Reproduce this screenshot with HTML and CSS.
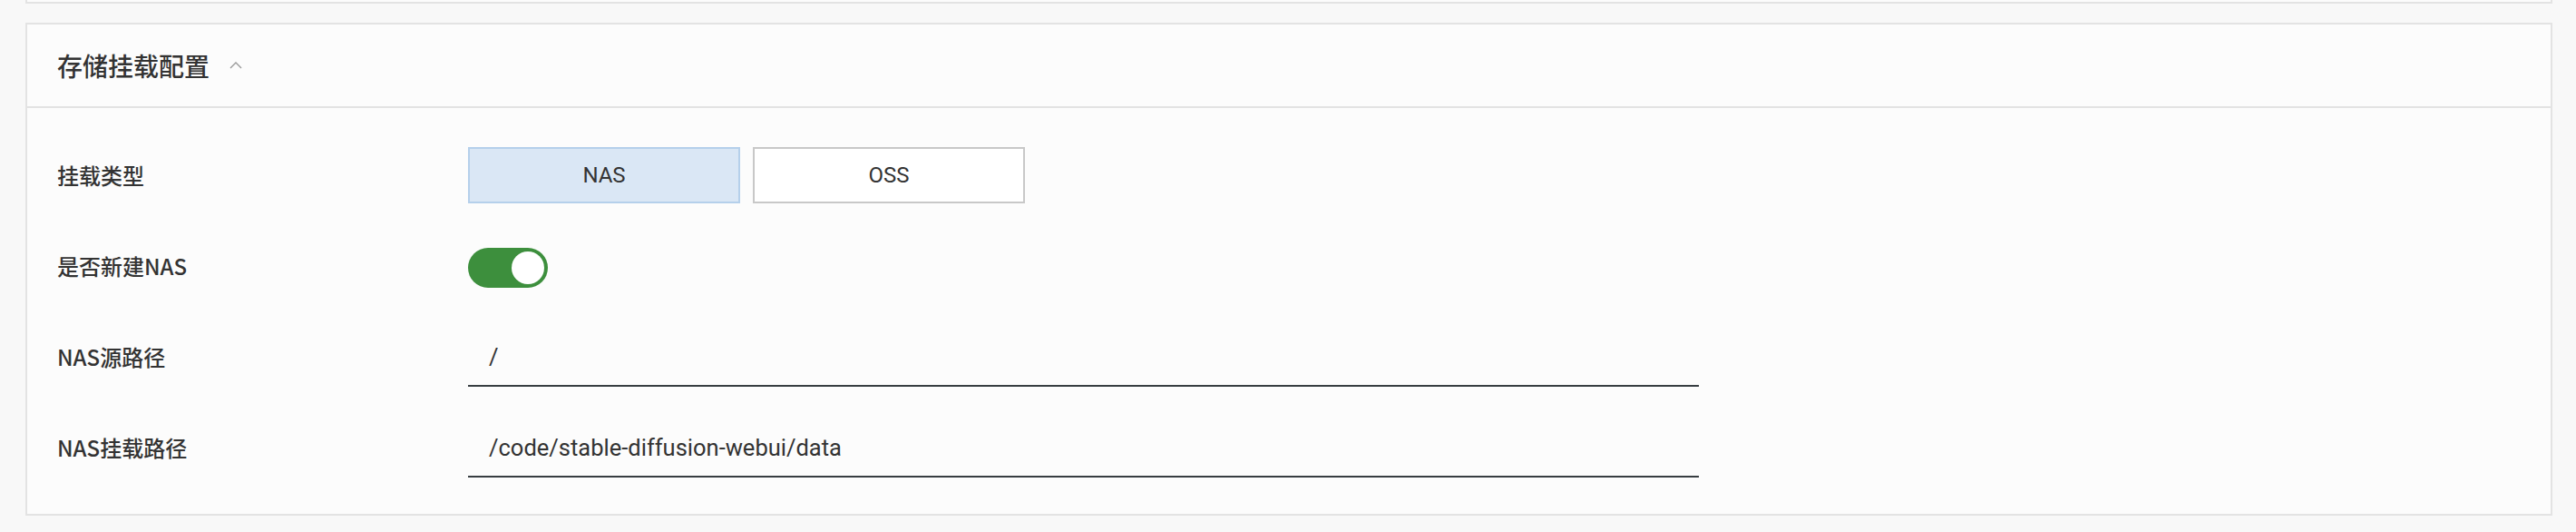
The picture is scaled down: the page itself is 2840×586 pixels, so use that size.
FILE: index.html
```html
<!DOCTYPE html>
<html lang="zh-CN">
<head>
<meta charset="utf-8">
<title>存储挂载配置</title>
<link rel="stylesheet" href="styles.css">
</head>
<body>
  <div class="prev-card"></div>
  <section class="card">
    <header class="card-header">
      <h2 class="card-title">存储挂载配置</h2>
      <svg class="chevron" width="14" height="9" viewBox="0 0 14 9" aria-hidden="true">
        <polyline points="1,8 7,2 13,8" fill="none" stroke="#9a9a9a" stroke-width="1.4"/>
      </svg>
    </header>
    <div class="card-body">
      <div class="form-row">
        <div class="form-label">挂载类型</div>
        <div class="form-control">
          <div class="radio-group">
            <button class="radio-btn is-active">NAS</button>
            <button class="radio-btn">OSS</button>
          </div>
        </div>
      </div>
      <div class="form-row">
        <div class="form-label">是否新建NAS</div>
        <div class="form-control">
          <div class="switch is-on"><span class="switch-knob"></span></div>
        </div>
      </div>
      <div class="form-row">
        <div class="form-label">NAS源路径</div>
        <div class="form-control">
          <div class="text-input">/</div>
        </div>
      </div>
      <div class="form-row">
        <div class="form-label">NAS挂载路径</div>
        <div class="form-control">
          <div class="text-input">/code/stable-diffusion-webui/data</div>
        </div>
      </div>
    </div>
  </section>
</body>
</html>
```

FILE: styles.css
```css
html, body {
  margin: 0;
  padding: 0;
}

body {
  background: #f8f8f8;
  width: 2840px;
  height: 586px;
  overflow: hidden;
  font-family: "Noto Sans CJK SC", "Noto Sans", sans-serif;
  color: #333333;
}

.prev-card {
  margin: 0 26px 0 28px;
  height: 2px;
  border: 2px solid #e3e3e3;
  border-top: none;
  background: #fcfcfc;
}

.card {
  margin: 21px 26px 0 28px;
  border: 2px solid #e3e3e3;
  background: #fcfcfc;
}

.card-header {
  height: 90px;
  display: flex;
  align-items: center;
  padding-left: 33px;
  border-bottom: 2px solid #e3e3e3;
}

.card-title {
  margin: 0;
  font-size: 28px;
  font-weight: 500;
  line-height: 40px;
  color: #333333;
}

.chevron {
  margin-left: 22px;
  margin-top: -2px;
}

.card-body {
  padding: 24px 0 23px 0;
}

.form-row {
  height: 100px;
  display: flex;
  align-items: center;
}

.form-label {
  width: 486px;
  padding-left: 33px;
  box-sizing: border-box;
  flex: none;
  font-size: 24px;
  font-weight: 500;
  color: #333333;
  line-height: 34px;
}

.form-control {
  flex: none;
  display: flex;
  align-items: center;
}

.radio-group {
  display: flex;
  gap: 14px;
}

.radio-btn {
  width: 300px;
  height: 62px;
  box-sizing: border-box;
  border: 2px solid #c8c8c8;
  background: #ffffff;
  font-family: Roboto, "Liberation Sans", sans-serif;
  font-size: 24px;
  color: #333333;
  padding: 0;
  cursor: pointer;
}

.radio-btn.is-active {
  border-color: #b5d0eb;
  background: #dae7f5;
}

.switch {
  width: 88px;
  height: 44px;
  border-radius: 22px;
  background: #3d8f3d;
  box-sizing: border-box;
  padding: 4px;
  display: flex;
  justify-content: flex-end;
  margin-top: 4px;
}

.switch-knob {
  width: 36px;
  height: 36px;
  border-radius: 50%;
  background: #ffffff;
}

.text-input {
  width: 1357px;
  height: 62px;
  box-sizing: border-box;
  border-bottom: 2px solid #373d41;
  padding-left: 23px;
  padding-bottom: 2px;
  display: flex;
  align-items: center;
  font-family: Roboto, "Liberation Sans", sans-serif;
  font-size: 25.5px;
  color: #333333;
  margin-top: 4px;
}
```
